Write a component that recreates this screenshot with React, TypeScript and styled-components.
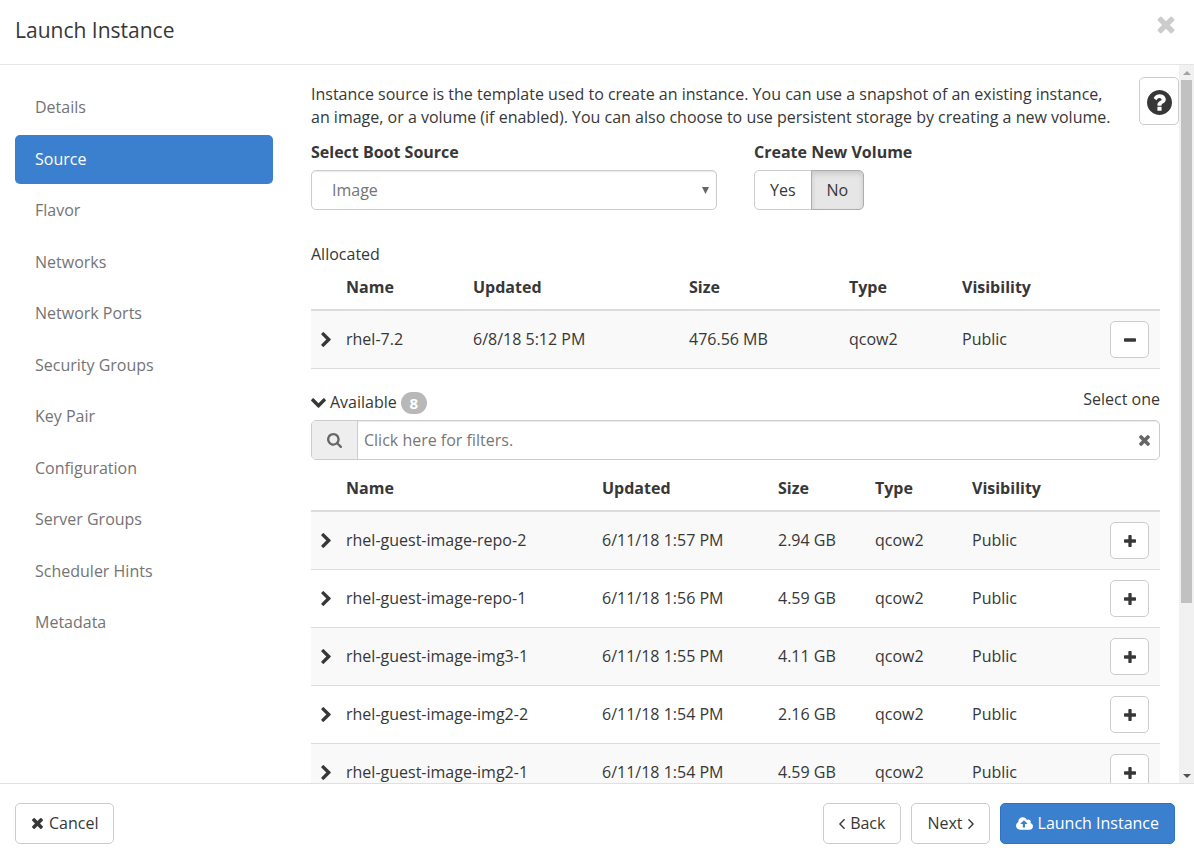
import React, { useState } from "react";
import styled, { createGlobalStyle, css } from "styled-components";

const color = {
  text: "#373737",
  muted: "#747474",
  line: "#dcdcdc",
  border: "#cccccc",
  blue: "#3b80ce",
  blueBorder: "#2f72be",
  stripe: "#f9f9f9",
};

const GlobalStyle = createGlobalStyle`
  *, *::before, *::after { box-sizing: border-box; }
  body {
    margin: 0;
    background: #fff;
    color: ${color.text};
    font: 16px/23px "Open Sans", "Noto Sans", sans-serif;
  }
  button, input, select { font: inherit; color: inherit; margin: 0; }
  p, h1, h2, ul { margin: 0; padding: 0; font-weight: 400; }
`;

type Glyph = { box: string; w: number; h: number; d: string };

const glyphs: Record<string, Glyph> = {
  times: {
    box: "192 256 1408 1408", w: 13, h: 13,
    d: "M1490 1322q0 40-28 68l-136 136q-28 28-68 28t-68-28l-294-294-294 294q-28 28-68 28t-68-28l-136-136q-28-28-28-68t28-68l294-294-294-294q-28-28-28-68t28-68l136-136q28-28 68-28t68 28l294 294 294-294q28-28 68-28t68 28l136 136q28 28 28 68t-28 68l-294 294 294 294q28 28 28 68z",
  },
  chevronRight: {
    box: "346 26 1036 1612", w: 10, h: 15,
    d: "M1363 877l-742 742q-19 19-45 19t-45-19l-166-166q-19-19-19-45t19-45l531-531-531-531q-19-19-19-45t19-45l166-166q19-19 45-19t45 19l742 742q19 19 19 45t-19 45z",
  },
  chevronDown: {
    box: "90 532 1612 1036", w: 15, h: 10,
    d: "M1683 808l-742 741q-19 19-45 19t-45-19l-742-741q-19-19-19-45.5t19-45.5l166-165q19-19 45-19t45 19l531 531 531-531q19-19 45-19t45 19l166 165q19 19 19 45.5t-19 45.5z",
  },
  search: {
    box: "64 128 1664 1664", w: 15, h: 15,
    d: "M1216 832q0-185-131.5-316.5t-316.5-131.5-316.5 131.5-131.5 316.5 131.5 316.5 316.5 131.5 316.5-131.5 131.5-316.5zm512 832q0 52-38 90t-90 38q-54 0-90-38l-343-342q-179 124-399 124-143 0-273.5-55.5t-225-150-150-225-55.5-273.5 55.5-273.5 150-225 225-150 273.5-55.5 273.5 55.5 225 150 150 225 55.5 273.5q0 220-124 399l343 343q37 37 37 90z",
  },
  plus: {
    box: "192 128 1408 1408", w: 12, h: 12,
    d: "M1600 736v192q0 40-28 68t-68 28h-416v416q0 40-28 68t-68 28h-192q-40 0-68-28t-28-68v-416h-416q-40 0-68-28t-28-68v-192q0-40 28-68t68-28h416v-416q0-40 28-68t68-28h192q40 0 68 28t28 68v416h416q40 0 68 28t28 68z",
  },
  minus: {
    box: "192 128 1408 1408", w: 12, h: 12,
    d: "M1600 736v192q0 40-28 68t-68 28h-1216q-40 0-68-28t-28-68v-192q0-40 28-68t68-28h1216q40 0 68 28t28 68z",
  },
  question: {
    box: "128 128 1536 1536", w: 25, h: 25,
    d: "M1024 1376v-192q0-14-9-23t-23-9h-192q-14 0-23 9t-9 23v192q0 14 9 23t23 9h192q14 0 23-9t9-23zm256-672q0-88-55.5-163t-138.5-116-170-41q-243 0-371 213-15 24 8 42l132 100q7 6 19 6 16 0 25-12 53-68 86-92 34-24 86-24 48 0 85.5 26t37.5 59q0 38-20 61t-68 45q-63 28-115.5 86.5t-52.5 125.5v36q0 14 9 23t23 9h192q14 0 23-9t9-23q0-19 21.5-49.5t54.5-49.5q32-18 49-28.5t46-35 44.5-48 28-60.5 12.5-81zm384 192q0 209-103 385.5t-279.5 279.5-385.5 103-385.5-103-279.5-279.5-103-385.5 103-385.5 279.5-279.5 385.5-103 385.5 103 279.5 279.5 103 385.5z",
  },
  angleLeft: {
    box: "621 461 582 998", w: 6, h: 10,
    d: "M1203 544q0 13-10 23l-393 393 393 393q10 10 10 23t-10 23l-50 50q-10 10-23 10t-23-10l-466-466q-10-10-10-23t10-23l466-466q10-10 23-10t23 10l50 50q10 10 10 23z",
  },
  angleRight: {
    box: "589 461 582 998", w: 6, h: 10,
    d: "M1171 960q0 13-10 23l-466 466q-10 10-23 10t-23-10l-50-50q-10-10-10-23t10-23l393-393-393-393q-10-10-10-23t10-23l50-50q10-10 23-10t23 10l466 466q10 10 10 23z",
  },
  cloudUpload: {
    box: "-64 128 1920 1408", w: 17, h: 13,
    d: "M1216 864q0-14-9-23l-352-352q-9-9-23-9t-23 9l-351 351q-10 12-10 24 0 14 9 23t23 9h224v352q0 13 9.5 22.5t22.5 9.5h192q13 0 22.5-9.5t9.5-22.5v-352h224q13 0 22.5-9.5t9.5-22.5zm640 288q0 159-112.5 271.5t-271.5 112.5h-1088q-185 0-316.5-131.5t-131.5-316.5q0-130 70-240t188-165q-2-30-2-43 0-212 150-362t362-150q156 0 285.5 87t188.5 231q71-62 166-62 106 0 181 75t75 181q0 76-41 138 130 31 213.5 135.5t83.5 238.5z",
  },
  caretSolid: { box: "0 0 14 14", w: 7, h: 7, d: "M0 0h14L7 14z" },
  caretUp: { box: "0 0 8 4", w: 8, h: 4, d: "M0 4h8L4 0z" },
  caretDown: { box: "0 0 8 4", w: 8, h: 4, d: "M0 0h8L4 4z" },
};

const Svg = styled.svg`
  display: block;
  flex: none;
  fill: currentColor;
`;

function Icon({ name, size }: { name: string; size?: number }) {
  const g = glyphs[name];
  return (
    <Svg viewBox={g.box} width={size ?? g.w} height={size ?? g.h} aria-hidden="true">
      <path d={g.d} />
    </Svg>
  );
}

const Dialog = styled.div`
  display: flex;
  flex-direction: column;
  height: 100vh;
  background: #fff;
`;

const Header = styled.header`
  display: flex;
  justify-content: space-between;
  align-items: flex-start;
  padding: 15px 18px 19px 15px;
  border-bottom: 1px solid #e5e5e5;
`;

const Title = styled.h1`
  font-size: 21px;
  line-height: 30px;
`;

const PlainButton = styled.button<{ $tone?: string }>`
  display: flex;
  align-items: center;
  justify-content: center;
  padding: 0;
  border: 0;
  background: none;
  cursor: pointer;
  color: ${(p) => p.$tone ?? "inherit"};
`;

const CloseButton = styled(PlainButton)`
  height: 20px;
`;

const Body = styled.div`
  display: flex;
  flex: 1;
  min-height: 0;
  overflow: hidden;
`;

const Sidebar = styled.nav`
  flex: none;
  width: 296px;
  padding: 18px 23px 0 15px;
`;

const NavList = styled.ul`
  display: flex;
  flex-direction: column;
  justify-content: space-between;
  min-height: 564px;
  list-style: none;
`;

const NavLink = styled.a<{ $active?: boolean }>`
  display: block;
  padding: 13px 20px;
  border-radius: 5px;
  text-decoration: none;
  color: ${(p) => (p.$active ? "#fff" : color.muted)};
  background: ${(p) => (p.$active ? color.blue : "transparent")};
`;

const Content = styled.main`
  flex: 1;
  min-width: 0;
  padding: 12px 0 0 15px;
`;

const IntroRow = styled.div`
  display: flex;
  align-items: flex-start;
  gap: 16px;
`;

const Intro = styled.p`
  flex: 1;
  padding-top: 6px;
`;

const controlFrame = css`
  border: 1px solid ${color.border};
  border-radius: 5px;
  background: #fff;
`;

const HelpButton = styled(PlainButton)`
  ${controlFrame}
  width: 40px;
  height: 48px;
  padding-top: 3px;
`;

const Panel = styled.div`
  margin: 12px 19px 0 0;
`;

const FieldGrid = styled.div`
  display: grid;
  grid-template-columns: 1fr 1fr;
  gap: 37px;
`;

const Field = styled.div`
  display: flex;
  flex-direction: column;
  gap: 6px;
`;

const FieldLabel = styled.label`
  font-weight: 700;
`;

const SelectWrap = styled.div`
  position: relative;
  color: ${color.muted};
`;

const Select = styled.select`
  ${controlFrame}
  display: block;
  width: 100%;
  height: 40px;
  padding: 0 20px;
  appearance: none;
  box-shadow: inset 0 1px 1px rgba(0, 0, 0, 0.08);
`;

const SelectArrow = styled.span`
  position: absolute;
  top: 17px;
  right: 8px;
  color: #666;
  pointer-events: none;
`;

const ToggleGroup = styled.div`
  display: flex;
`;

const Toggle = styled.button<{ $on: boolean }>`
  height: 40px;
  padding: 0 15px;
  cursor: pointer;
  border: 1px solid ${(p) => (p.$on ? "#adadad" : color.border)};
  background: ${(p) => (p.$on ? "#e6e6e6" : "#fff")};
  box-shadow: ${(p) => (p.$on ? "inset 0 3px 5px rgba(0, 0, 0, 0.125)" : "none")};
  z-index: ${(p) => (p.$on ? 1 : 0)};

  &:first-child { border-radius: 5px 0 0 5px; }
  &:last-child { border-radius: 0 5px 5px 0; margin-left: -1px; }
`;

const SectionTitle = styled.h2`
  margin-top: 33px;
  font-size: 16px;
  line-height: 23px;
`;

const AvailableRow = styled.div`
  display: flex;
  justify-content: space-between;
  align-items: flex-start;
  margin: 19px 0 6px;
`;

const AvailableTitle = styled(PlainButton)`
  gap: 4px;
  padding-top: 3px;
`;

const Badge = styled.span`
  min-width: 26px;
  border-radius: 11px;
  background: #b8b8b8;
  color: #fff;
  font-size: 15px;
  font-weight: 700;
  line-height: 22px;
  text-align: center;
`;

const SearchBox = styled.div`
  ${controlFrame}
  display: flex;
  height: 40px;
  margin-bottom: 7px;
  overflow: hidden;
  color: #666;
  box-shadow: inset 0 1px 1px rgba(0, 0, 0, 0.08);
`;

const SearchAddon = styled.label`
  display: flex;
  align-items: center;
  justify-content: center;
  width: 46px;
  background: #eee;
  border-right: 1px solid ${color.border};
`;

const SearchInput = styled.input`
  flex: 1;
  min-width: 0;
  padding: 0 6px;
  border: 0;
  background: none;
  outline: none;

  &::placeholder { color: #777; opacity: 1; }
`;

const ClearButton = styled(PlainButton)`
  width: 29px;
`;

const Table = styled.table`
  width: 100%;
  table-layout: fixed;
  border-collapse: separate;
  border-spacing: 0;
  text-align: left;
  white-space: nowrap;
`;

const Th = styled.th`
  padding: 10px;
  font-weight: 700;
  border-bottom: 2px solid ${color.line};
`;

const Tr = styled.tr`
  &:nth-child(odd) { background: ${color.stripe}; }
`;

const Td = styled.td<{ $tight?: boolean }>`
  padding: ${(p) => (p.$tight ? "10px 0 10px 10px" : "10px")};
  border-bottom: 1px solid ${color.line};
`;

const RowButton = styled(PlainButton)`
  ${controlFrame}
  width: 39px;
  height: 37px;
`;

const Scrollbar = styled.div`
  display: flex;
  flex: none;
  flex-direction: column;
  width: 15px;
  background: #f1f1f1;
`;

const ScrollArrow = styled.span<{ $tone: string }>`
  display: flex;
  align-items: center;
  justify-content: center;
  height: 15px;
  color: ${(p) => p.$tone};
`;

const ScrollTrack = styled.div`
  flex: 1;
  padding: 0 2px;
`;

const ScrollThumb = styled.div`
  height: 76%;
  background: #c1c1c1;
`;

const Footer = styled.footer`
  display: flex;
  justify-content: space-between;
  padding: 19px 19px 11px 15px;
  border-top: 1px solid #e0e0e0;
`;

const Actions = styled.div`
  display: flex;
  gap: 10px;
`;

const Button = styled.button<{ $primary?: boolean }>`
  display: flex;
  align-items: center;
  gap: 5px;
  height: 41px;
  padding: 0 15px;
  border: 1px solid ${(p) => (p.$primary ? color.blueBorder : color.border)};
  border-radius: 5px;
  background: ${(p) => (p.$primary ? color.blue : "#fff")};
  color: ${(p) => (p.$primary ? "#fff" : color.text)};
  cursor: pointer;
`;

const steps = [
  "Details", "Source", "Flavor", "Networks", "Network Ports", "Security Groups",
  "Key Pair", "Configuration", "Server Groups", "Scheduler Hints", "Metadata",
];

type Image = { name: string; updated: string; size: string };

const allocated: Image[] = [{ name: "rhel-7.2", updated: "6/8/18 5:12 PM", size: "476.56 MB" }];

const available: Image[] = [
  { name: "rhel-guest-image-repo-2", updated: "6/11/18 1:57 PM", size: "2.94 GB" },
  { name: "rhel-guest-image-repo-1", updated: "6/11/18 1:56 PM", size: "4.59 GB" },
  { name: "rhel-guest-image-img3-1", updated: "6/11/18 1:55 PM", size: "4.11 GB" },
  { name: "rhel-guest-image-img2-2", updated: "6/11/18 1:54 PM", size: "2.16 GB" },
  { name: "rhel-guest-image-img2-1", updated: "6/11/18 1:54 PM", size: "4.59 GB" },
];

const Col = styled.col<{ $w: number }>`
  width: ${(p) => p.$w}px;
`;

function ImageTable({ rows, widths, action }: { rows: Image[]; widths: number[]; action: "plus" | "minus" }) {
  return (
    <Table>
      <colgroup>
        {widths.map((w, i) => <Col key={i} $w={w} />)}
      </colgroup>
      <thead>
        <tr>
          <Th />
          <Th scope="col">Name</Th>
          <Th scope="col">Updated</Th>
          <Th scope="col">Size</Th>
          <Th scope="col">Type</Th>
          <Th scope="col">Visibility</Th>
          <Th />
        </tr>
      </thead>
      <tbody>
        {rows.map((r) => (
          <Tr key={r.name}>
            <Td $tight><PlainButton type="button"><Icon name="chevronRight" /></PlainButton></Td>
            <Td>{r.name}</Td>
            <Td>{r.updated}</Td>
            <Td>{r.size}</Td>
            <Td>qcow2</Td>
            <Td>Public</Td>
            <Td><RowButton type="button"><Icon name={action} /></RowButton></Td>
          </Tr>
        ))}
      </tbody>
    </Table>
  );
}

export default function App() {
  const [newVolume, setNewVolume] = useState(false);

  return (
    <>
      <GlobalStyle />
      <Dialog>
        <Header>
          <Title>Launch Instance</Title>
          <CloseButton type="button" $tone="#cccccc"><Icon name="times" size={20} /></CloseButton>
        </Header>

        <Body>
          <Sidebar>
            <NavList>
              {steps.map((s) => (
                <li key={s}><NavLink href="#" $active={s === "Source"}>{s}</NavLink></li>
              ))}
            </NavList>
          </Sidebar>

          <Content>
            <IntroRow>
              <Intro>
                Instance source is the template used to create an instance. You can use a snapshot of an
                existing instance, an image, or a volume (if enabled). You can also choose to use
                persistent storage by creating a new volume.
              </Intro>
              <HelpButton type="button"><Icon name="question" /></HelpButton>
            </IntroRow>

            <Panel>
              <FieldGrid>
                <Field>
                  <FieldLabel htmlFor="boot-source">Select Boot Source</FieldLabel>
                  <SelectWrap>
                    <Select id="boot-source" defaultValue="image">
                      <option value="image">Image</option>
                    </Select>
                    <SelectArrow><Icon name="caretSolid" /></SelectArrow>
                  </SelectWrap>
                </Field>
                <Field>
                  <FieldLabel as="span" id="new-volume">Create New Volume</FieldLabel>
                  <ToggleGroup role="group" aria-labelledby="new-volume">
                    <Toggle type="button" $on={newVolume} aria-pressed={newVolume} onClick={() => setNewVolume(true)}>Yes</Toggle>
                    <Toggle type="button" $on={!newVolume} aria-pressed={!newVolume} onClick={() => setNewVolume(false)}>No</Toggle>
                  </ToggleGroup>
                </Field>
              </FieldGrid>

              <SectionTitle>Allocated</SectionTitle>
              <ImageTable rows={allocated} widths={[25, 127, 216, 160, 113, 148, 60]} action="minus" />

              <AvailableRow>
                <AvailableTitle type="button">
                  <Icon name="chevronDown" />
                  Available
                  <Badge>8</Badge>
                </AvailableTitle>
                <span>Select one</span>
              </AvailableRow>
              <SearchBox>
                <SearchAddon htmlFor="image-filter"><Icon name="search" /></SearchAddon>
                <SearchInput type="text" id="image-filter" placeholder="Click here for filters." />
                <ClearButton type="button"><Icon name="times" /></ClearButton>
              </SearchBox>
              <ImageTable rows={available} widths={[25, 256, 176, 97, 97, 138, 60]} action="plus" />
            </Panel>
          </Content>

          <Scrollbar>
            <ScrollArrow $tone="#a3a3a3"><Icon name="caretUp" /></ScrollArrow>
            <ScrollTrack><ScrollThumb /></ScrollTrack>
            <ScrollArrow $tone="#505050"><Icon name="caretDown" /></ScrollArrow>
          </Scrollbar>
        </Body>

        <Footer>
          <Button type="button"><Icon name="times" />Cancel</Button>
          <Actions>
            <Button type="button"><Icon name="angleLeft" />Back</Button>
            <Button type="button">Next<Icon name="angleRight" /></Button>
            <Button type="button" $primary><Icon name="cloudUpload" />Launch Instance</Button>
          </Actions>
        </Footer>
      </Dialog>
    </>
  );
}
